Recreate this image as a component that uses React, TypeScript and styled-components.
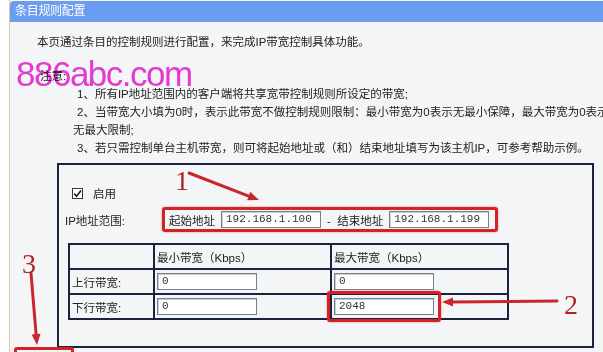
import React from "react";
import styled, { createGlobalStyle } from "styled-components";

const GlobalStyle = createGlobalStyle`
  html, body {
    margin: 0;
    padding: 0;
    background: #ffffff;
  }
  * {
    box-sizing: border-box;
  }
`;

const Page = styled.div`
  position: relative;
  width: 603px;
  height: 352px;
  overflow: hidden;
  background: #ffffff;
  font-family: "Liberation Sans", "Noto Sans CJK SC", sans-serif;
  font-size: 11.5px;
  color: #222;
`;

const Panel = styled.div`
  margin-left: 9px;
  height: 100%;
  border-left: 1px solid #e3c6a4;
  background: #f4f5f7;
  display: flex;
  flex-direction: column;
`;

const TitleBar = styled.div`
  margin-top: 1px;
  height: 21px;
  line-height: 21px;
  padding-left: 5px;
  background: #6a9cef;
  border-top-left-radius: 4px;
  color: #ffffff;
  font-size: 12px;
  letter-spacing: -0.3px;
`;

const Body = styled.div`
  display: flex;
  flex-direction: column;
  padding-top: 11px;
`;

const Line = styled.div<{ $indent: number; $gap?: number }>`
  margin-left: ${(p) => p.$indent}px;
  margin-top: ${(p) => p.$gap ?? 0}px;
  height: 18px;
  line-height: 18px;
  white-space: nowrap;
`;

const Watermark = styled.div`
  position: absolute;
  left: 16px;
  top: 59px;
  font-family: "Liberation Sans", Arial, sans-serif;
  font-size: 35px;
  letter-spacing: -1.5px;
  color: #f03cd6;
  line-height: 30px;
  mix-blend-mode: multiply;
  pointer-events: none;
`;

const RuleBox = styled.div`
  margin-left: 47px;
  margin-top: 6px;
  width: 537px;
  height: 185px;
  border: 2px solid #1b2340;
  display: flex;
  flex-direction: column;
`;

const EnableRow = styled.div`
  margin-top: 19px;
  margin-left: 13px;
  height: 18px;
  display: flex;
  align-items: center;
  gap: 10px;
`;

const CheckBox = styled.span`
  width: 11px;
  height: 11px;
  border: 1px solid #3a3a3a;
  background: #ffffff;
  display: flex;
  align-items: center;
  justify-content: center;
`;

const RangeRow = styled.div`
  margin-top: 5px;
  margin-left: 6px;
  display: flex;
  align-items: center;
`;

const RangeLabel = styled.span`
  width: 97px;
  white-space: nowrap;
`;

const Highlight = styled.div`
  height: 25px;
  border: 3px solid #d42225;
  border-radius: 3px;
  box-shadow: 0 0 2px rgba(212, 34, 37, 0.6);
  display: flex;
  align-items: center;
  padding: 0 6px 0 4px;
  gap: 6px;
  white-space: nowrap;
`;

const TextInput = styled.div<{ $width?: number }>`
  width: ${(p) => p.$width ?? 100}px;
  height: 17px;
  line-height: 15px;
  padding-left: 4px;
  background: #ffffff;
  border: 1px solid #76818e;
  box-shadow: inset 1px 1px 0 #c9ccd0;
  font-family: "Liberation Mono", "DejaVu Sans Mono", monospace;
  font-size: 11px;
  color: #333;
  white-space: nowrap;
`;

const Grid = styled.div`
  margin-top: 11px;
  margin-left: 9px;
  width: 441px;
  display: grid;
  grid-template-columns: 83px 175px 175px;
  grid-auto-rows: 23px;
  gap: 2px;
  padding: 2px;
  background: #1b2340;
`;

const Cell = styled.div`
  position: relative;
  background: #f4f5f7;
  display: flex;
  align-items: center;
  padding-left: 2px;
  white-space: nowrap;
`;

const Mark = styled.div`
  position: absolute;
  left: -7px;
  top: -7px;
  width: 114px;
  height: 31px;
  border: 3px solid #d42225;
  border-radius: 3px;
  box-shadow: 0 0 2px rgba(212, 34, 37, 0.6);
  pointer-events: none;
`;

const InputHolder = styled.div`
  position: relative;
`;

const BottomMark = styled.div`
  position: absolute;
  left: 14px;
  top: 347px;
  width: 60px;
  height: 30px;
  border: 3px solid #d42225;
  border-radius: 3px;
`;

const Annotations = styled.svg`
  position: absolute;
  left: 0;
  top: 0;
  pointer-events: none;
`;

const Arrow = ({ x1, y1, x2, y2 }: { x1: number; y1: number; x2: number; y2: number }) => {
  const a = Math.atan2(y2 - y1, x2 - x1);
  const len = 11;
  const w = 4.5;
  const bx = x2 - len * Math.cos(a);
  const by = y2 - len * Math.sin(a);
  const px = -Math.sin(a) * w;
  const py = Math.cos(a) * w;
  return (
    <g>
      <line x1={x1} y1={y1} x2={bx} y2={by} stroke="#c8262b" strokeWidth={3} strokeLinecap="round" />
      <polygon points={`${x2},${y2} ${bx + px},${by + py} ${bx - px},${by - py}`} fill="#c8262b" />
    </g>
  );
};

const App: React.FC = () => {
  return (
    <>
      <GlobalStyle />
      <Page>
        <Panel>
          <TitleBar>条目规则配置</TitleBar>
          <Body>
            <Line $indent={27}>本页通过条目的控制规则进行配置，来完成IP带宽控制具体功能。</Line>
            <Line $indent={30} $gap={16}>注意:</Line>
            <Line $indent={67}>1、所有IP地址范围内的客户端将共享宽带控制规则所设定的带宽;</Line>
            <Line $indent={67}>2、当带宽大小填为0时，表示此带宽不做控制规则限制：最小带宽为0表示无最小保障，最大带宽为0表示</Line>
            <Line $indent={63}>无最大限制;</Line>
            <Line $indent={67}>3、若只需控制单台主机带宽，则可将起始地址或（和）结束地址填写为该主机IP，可参考帮助示例。</Line>
            <RuleBox>
              <EnableRow>
                <CheckBox>
                  <svg width="9" height="9" viewBox="0 0 9 9">
                    <path d="M1.2 4.6 L3.6 7.2 L8 1.4" fill="none" stroke="#222" strokeWidth="1.6" />
                  </svg>
                </CheckBox>
                <span>启用</span>
              </EnableRow>
              <RangeRow>
                <RangeLabel>IP地址范围:</RangeLabel>
                <Highlight>
                  <span>起始地址</span>
                  <TextInput>192.168.1.100</TextInput>
                  <span>-&nbsp;&nbsp;结束地址</span>
                  <TextInput>192.168.1.199</TextInput>
                </Highlight>
              </RangeRow>
              <Grid>
                <Cell />
                <Cell>最小带宽（Kbps）</Cell>
                <Cell>最大带宽（Kbps）</Cell>
                <Cell>上行带宽:</Cell>
                <Cell>
                  <TextInput>0</TextInput>
                </Cell>
                <Cell>
                  <TextInput>0</TextInput>
                </Cell>
                <Cell>下行带宽:</Cell>
                <Cell>
                  <TextInput>0</TextInput>
                </Cell>
                <Cell>
                  <InputHolder>
                    <TextInput>2048</TextInput>
                    <Mark />
                  </InputHolder>
                </Cell>
              </Grid>
            </RuleBox>
          </Body>
        </Panel>
        <Watermark>886abc.com</Watermark>
        <BottomMark />
        <Annotations width={603} height={352}>
          <Arrow x1={189} y1={173} x2={259} y2={200} />
          <Arrow x1={557} y1={301} x2={442} y2={302} />
          <Arrow x1={31} y1={273} x2={37} y2={345} />
          <text x={175} y={190} fontFamily="Liberation Serif, serif" fontSize={28} fill="#a8262a">1</text>
          <text x={564} y={314} fontFamily="Liberation Serif, serif" fontSize={28} fill="#a8262a">2</text>
          <text x={22} y={273} fontFamily="Liberation Serif, serif" fontSize={28} fill="#a8262a">3</text>
        </Annotations>
      </Page>
    </>
  );
};

export default App;
